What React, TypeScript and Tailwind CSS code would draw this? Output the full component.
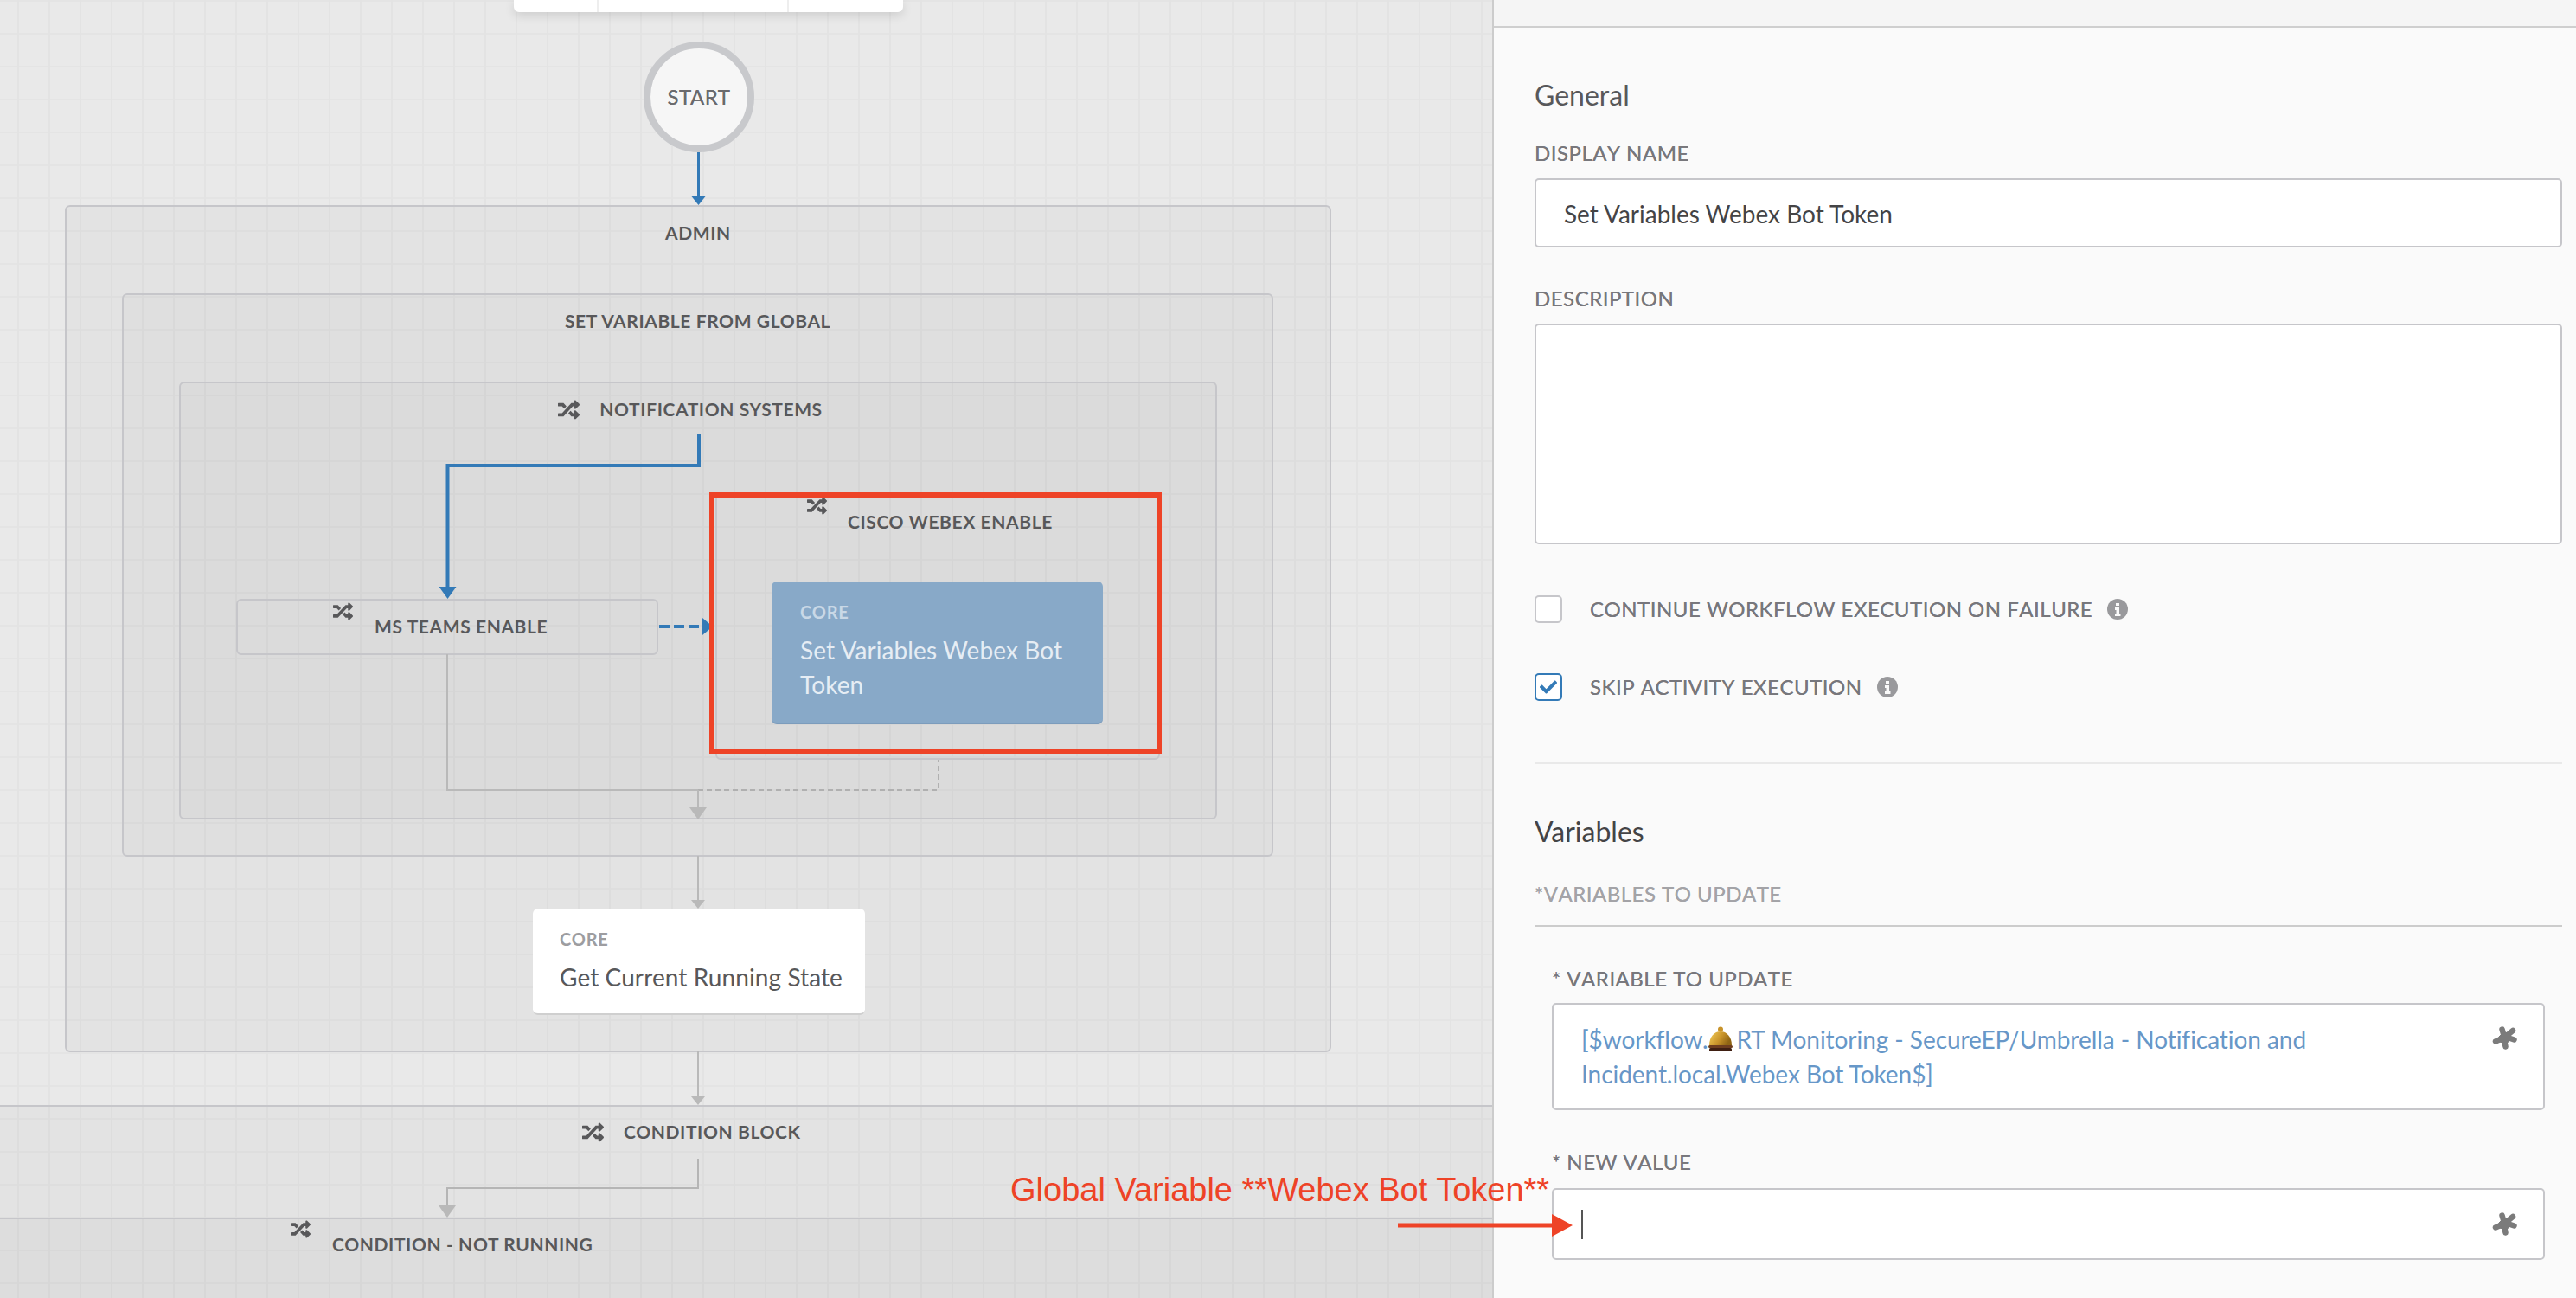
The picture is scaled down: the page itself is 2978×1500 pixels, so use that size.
import { FaCheck, FaRandom } from "react-icons/fa";

const FONT = "font-['Lato','Carlito','Open_Sans',sans-serif]";
const GROUP = "shrink-0 rounded-[6px] border-2 border-[#c6c6ca]";
const LABEL = "text-[21px] leading-[28px] font-bold tracking-[0.6px] whitespace-nowrap text-[#58585a]";
const CARD_TAG = "text-[20px] leading-[28px] font-bold tracking-[0.8px]";
const CARD_TITLE = "mt-[10px] text-[28px] leading-[40px] tracking-[0.1px]";

function Arrow({ x, y, color, size = 10 }: { x: number; y: number; color: string; size?: number }) {
  // y is the tip of the arrow
  return <polygon points={`${x - size},${y - 2 * size + 6} ${x + size},${y - 2 * size + 6} ${x},${y}`} fill={color} />;
}

function Connectors() {
  return (
    <svg className="absolute inset-0 h-[1500px] w-[1725px]" viewBox="0 0 1725 1500" fill="none">
      <path d="M807.5 176V226" stroke="#337ab7" strokeWidth="3" />
      <Arrow x={807.5} y={237} color="#337ab7" size={8} />

      <path d="M808 502V538H517.5V680" stroke="#337ab7" strokeWidth="4" />
      <Arrow x={517.5} y={692} color="#337ab7" />
      <path d="M762 724H812" stroke="#337ab7" strokeWidth="4" strokeDasharray="12 5" />
      <polygon points="812,714 824,724 812,734" fill="#337ab7" />

      <path d="M517 756V913H807" stroke="#b9b9b9" strokeWidth="2" />
      <path d="M807 913H1085V878" stroke="#b0b0b0" strokeWidth="2" strokeDasharray="6 4" />
      <path d="M807 913V936" stroke="#b9b9b9" strokeWidth="2" />
      <Arrow x={807} y={947} color="#b9b9b9" />

      <path d="M807 989V1042" stroke="#b9b9b9" strokeWidth="2" />
      <Arrow x={807} y={1050} color="#b9b9b9" size={8} />
      <path d="M807 1215V1268" stroke="#b9b9b9" strokeWidth="2" />
      <Arrow x={807} y={1277} color="#b9b9b9" size={8} />
      <path d="M807 1339V1373H517V1396" stroke="#b5b5b5" strokeWidth="2" />
      <Arrow x={517} y={1407} color="#b9b9b9" />
    </svg>
  );
}

function Canvas() {
  return (
    <div className="relative flex h-[1500px] w-[1725px] shrink-0 flex-col overflow-hidden bg-[#e9e9e9] bg-[linear-gradient(to_right,#e3e3e3_2px,transparent_2px),linear-gradient(to_bottom,#e4e4e4_2px,transparent_2px)] bg-[size:36px_38px] bg-[position:20px_38px]">
      {/* toolbar cut off by the top of the window */}
      <div className="ml-[594px] flex h-[14px] w-[450px] shrink-0 rounded-b-[6px] bg-white shadow-[0_4px_12px_rgba(0,0,0,0.12)]">
        <div className="w-[98px] border-r-2 border-[#eeeeee]" />
        <div className="w-[220px] border-r-2 border-[#eeeeee]" />
      </div>

      <div className="mt-[34px] ml-[744px] flex h-[128px] w-[128px] shrink-0 items-center justify-center rounded-full border-[8px] border-[#c8c9cc] bg-[#f6f6f6] text-[24px] tracking-[0.5px] text-[#6a6a6d] [text-shadow:0_0_0.4px_#6a6a6d]">
        START
      </div>

      {/* ADMIN */}
      <div className={`${GROUP} mt-[61px] ml-[75px] flex h-[979px] w-[1464px] flex-col bg-black/[0.025] pt-[16px]`}>
        <div className={`${LABEL} text-center`}>ADMIN</div>

        <div className={`${GROUP} mt-[56px] ml-[64px] flex h-[651px] w-[1331px] flex-col bg-black/[0.016] pt-[16px]`}>
          <div className={`${LABEL} text-center`}>SET VARIABLE FROM GLOBAL</div>

          <div className={`${GROUP} mt-[56px] ml-[64px] flex h-[506px] w-[1200px] flex-col bg-black/[0.014] pt-[16px]`}>
            <div className="flex items-center justify-center gap-[23px] pr-[18px]">
              <FaRandom className="h-[25px] w-[25px] text-[#58585a]" />
              <div className={LABEL}>NOTIFICATION SYSTEMS</div>
            </div>

            <div className="mt-[83px] ml-[64px] flex items-start gap-[66px]">
              <div className={`${GROUP} mt-[122px] flex h-[65px] w-[488px] items-start gap-[25px] pt-[1px] pl-[110px]`}>
                <FaRandom className="h-[23px] w-[23px] text-[#58585a]" />
                <div className={`${LABEL} mt-[15px]`}>MS TEAMS ENABLE</div>
              </div>

              <div className={`${GROUP} flex h-[308px] w-[514px] flex-col pt-[1px] pl-[104px]`}>
                <div className="flex items-start gap-[24px]">
                  <FaRandom className="h-[23px] w-[23px] text-[#58585a]" />
                  <div className={`${LABEL} mt-[16px]`}>CISCO WEBEX ENABLE</div>
                </div>
                <div className="mt-[55px] -ml-[41px] h-[165px] w-[383px] rounded-[6px] border-b-2 border-[#7c9cbc] bg-[#88a9c8] pt-[21px] pr-[20px] pl-[33px]">
                  <div className={`${CARD_TAG} text-[#c9d8e6]`}>CORE</div>
                  <div className={`${CARD_TITLE} text-[#e6edf4]`}>Set Variables Webex Bot Token</div>
                </div>
              </div>
            </div>
          </div>
        </div>

        <div className="mt-[60px] ml-[539px] h-[123px] w-[384px] shrink-0 rounded-[6px] border-b-2 border-[#cfcfcf] bg-white pt-[21px] pl-[31px]">
          <div className={`${CARD_TAG} text-[#9d9da0]`}>CORE</div>
          <div className={`${CARD_TITLE} whitespace-nowrap text-[#58585a]`}>Get Current Running State</div>
        </div>
      </div>

      {/* condition bands run off the canvas */}
      <div className="mt-[61px] flex h-[223px] shrink-0 flex-col border-t-2 border-[#c6c6ca] bg-black/[0.025] pt-[15px]">
        <div className="flex items-center gap-[23px] pl-[673px]">
          <FaRandom className="h-[25px] w-[25px] text-[#58585a]" />
          <div className={LABEL}>CONDITION BLOCK</div>
        </div>
        <div className="mt-[85px] flex flex-1 items-start gap-[25px] border-t-2 border-[#c6c6ca] bg-black/[0.025] pl-[336px]">
          <FaRandom className="h-[23px] w-[23px] text-[#58585a]" />
          <div className={`${LABEL} mt-[15px] tracking-[0.5px]`}>CONDITION - NOT RUNNING</div>
        </div>
      </div>

      <Connectors />

      {/* highlight drawn on the screenshot */}
      <div className="absolute top-[569px] left-[820px] h-[302px] w-[523px] border-[6px] border-[#ee4327]" />
    </div>
  );
}

function FieldLabel({ children, className = "text-[#77777c]" }: { children: string; className?: string }) {
  return (
    <div className={`text-[24px] leading-[30px] tracking-[0.5px] whitespace-nowrap [font-kerning:none] [text-shadow:0_0_0.5px_currentColor] ${className}`}>
      {children}
    </div>
  );
}

function InfoDot() {
  return (
    <svg viewBox="0 0 24 24" className="ml-[17px] h-[24px] w-[24px]">
      <circle cx="12" cy="12" r="12" fill="#99999c" />
      <path d="M10 5h4v3h-4zM9 10h5v7h1.500v3h-6.500v-3h1.500v-4h-1.500z" fill="#fafafa" />
    </svg>
  );
}

function Bell() {
  return (
    <svg viewBox="0 0 30 30" className="mr-[3px] inline-block h-[30px] w-[30px] align-[-4px]">
      <defs>
        <linearGradient id="gold" x1="0" x2="1" y1="0" y2="0.4">
          <stop offset="0" stopColor="#f5cf5a" />
          <stop offset="0.6" stopColor="#c8932a" />
          <stop offset="1" stopColor="#8f6414" />
        </linearGradient>
      </defs>
      <circle cx="15" cy="3.500" r="3" fill="#c8932a" />
      <path d="M2 22C2 12 8 6 15 6s13 6 13 16z" fill="url(#gold)" />
      <rect x="1" y="22" width="28" height="3" rx="1.500" fill="#6e3d1f" />
      <rect x="2" y="25" width="26" height="4" rx="1.500" fill="#3f1f12" />
    </svg>
  );
}

function Puzzle() {
  // fa4 puzzle piece, leaning to the right
  return (
    <svg viewBox="8 8 30 30" className="h-[30px] w-[30px] shrink-0" fill="#7b7b7b" stroke="#7b7b7b" strokeLinecap="round">
      <polygon points="16,21 21,16 29,17 28,26 24,29 17,27" />
      <path d="M19.500 12.500L22 21M32 14L26 19M33.500 24.500L26 22M23.500 32.500L22 24M12 26.500L20 23" strokeWidth="6.500" fill="none" />
    </svg>
  );
}

function CheckRow({ label, checked, className }: { label: string; checked?: boolean; className: string }) {
  return (
    <div className={`flex h-[32px] items-center ${className}`}>
      <div
        className={`flex h-[32px] w-[32px] items-center justify-center rounded-[5px] border-2 bg-white ${
          checked ? "border-[#337ab7]" : "border-[#c6c6ca]"
        }`}
      >
        {checked && <FaCheck className="h-[20px] w-[20px] text-[#337ab7]" />}
      </div>
      <div className="ml-[32px]">
        <FieldLabel>{label}</FieldLabel>
      </div>
      <InfoDot />
    </div>
  );
}

function Panel() {
  return (
    <div className="h-[1500px] flex-1 border-l-2 border-[#cccccc] bg-[#fafafa]">
      <div className="h-[32px] border-b-2 border-[#cfcfcf] bg-[#f5f5f5]" />
      <div className="pr-[16px] pl-[47px]">
        <div className="mt-[58px] text-[32px] leading-[40px] text-[#58585a]">General</div>
        <div className="mt-[32px]">
          <FieldLabel>DISPLAY NAME</FieldLabel>
        </div>
        <div className="mt-[14px] flex h-[80px] items-center rounded-[5px] border-2 border-[#c6c6ca] bg-white pt-[2px] pl-[32px] text-[28px] text-[#444446]">
          Set Variables Webex Bot Token
        </div>
        <div className="mt-[44px]">
          <FieldLabel>DESCRIPTION</FieldLabel>
        </div>
        <div className="mt-[14px] h-[255px] rounded-[5px] border-2 border-[#c6c6ca] bg-white" />
        <CheckRow label="CONTINUE WORKFLOW EXECUTION ON FAILURE" className="mt-[59px]" />
        <CheckRow label="SKIP ACTIVITY EXECUTION" checked className="mt-[58px]" />
        <div className="mt-[71px] h-[2px] bg-[#e9e9e9]" />
        <div className="mt-[58px] text-[32px] leading-[40px] text-[#444446]">Variables</div>
        <div className="mt-[37px]">
          <FieldLabel className="text-[#a3a3a7]">*VARIABLES TO UPDATE</FieldLabel>
        </div>
        <div className="mt-[21px] h-[2px] bg-[#cccccc]" />
        <div className="px-[20px]">
          <div className="mt-[45px]">
            <FieldLabel>* VARIABLE TO UPDATE</FieldLabel>
          </div>
          <div className="mt-[13px] flex h-[124px] items-start justify-between rounded-[5px] border-2 border-[#c6c6ca] bg-white pt-[20px] pr-[29px] pl-[32px]">
            <div className="w-[900px] text-[28px] leading-[40px] tracking-[-0.05px] text-[#6797c8]">
              [$workflow.
              <Bell />
              RT Monitoring - SecureEP/Umbrella - Notification and Incident.local.Webex Bot Token$]
            </div>
            <div className="mt-[4px]">
              <Puzzle />
            </div>
          </div>
          <div className="mt-[45px]">
            <FieldLabel>* NEW VALUE</FieldLabel>
          </div>
          <div className="mt-[15px] flex h-[83px] items-center justify-between rounded-[5px] border-2 border-[#c6c6ca] bg-white pr-[29px] pl-[32px]">
            <div className="h-[34px] w-[2px] bg-[#555555]" />
            <Puzzle />
          </div>
        </div>
      </div>
    </div>
  );
}

export default function App() {
  return (
    <div className={`relative flex h-[1500px] w-[2978px] overflow-hidden ${FONT}`}>
      <Canvas />
      <Panel />

      {/* red annotation on top of the screenshot */}
      <div className="absolute top-[1353px] left-[1168px] font-['Liberation_Sans',sans-serif] text-[38px] leading-[44px] whitespace-nowrap text-[#ee4327]">
        Global Variable **Webex Bot Token**
      </div>
      <svg className="absolute top-[1400px] left-[1616px] h-[30px] w-[204px]" viewBox="0 0 204 30">
        <path d="M0 16H180" stroke="#ee4327" strokeWidth="5" />
        <polygon points="178,3 202,16 178,29" fill="#ee4327" />
      </svg>
    </div>
  );
}
